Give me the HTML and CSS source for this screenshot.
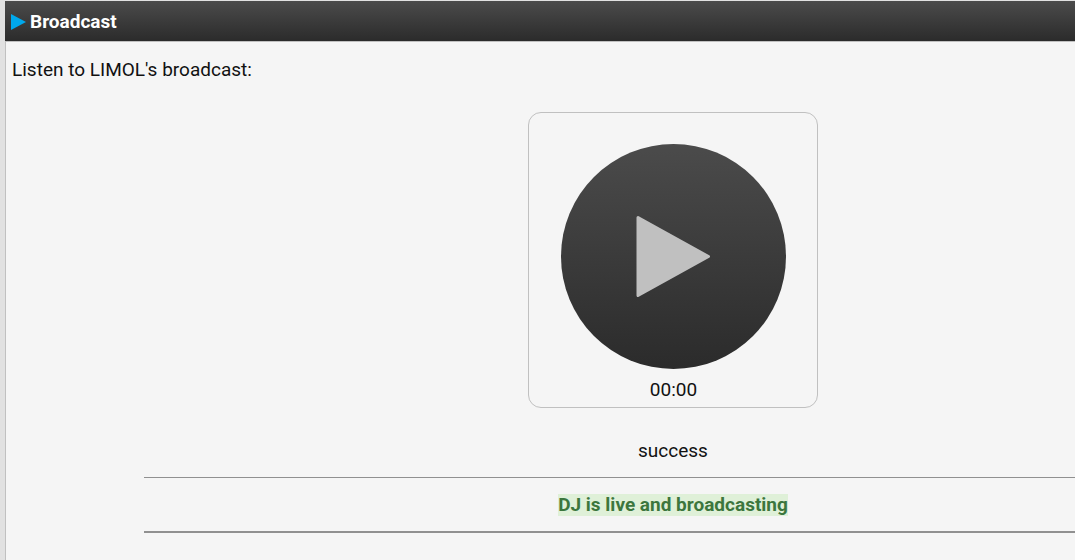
FILE: index.html
```html
<!DOCTYPE html>
<html lang="en">
<head>
<meta charset="utf-8">
<title>Broadcast</title>
<link rel="stylesheet" href="styles.css">
</head>
<body>
<main class="panel">
  <h1 class="panel-title">
    <svg class="title-icon" viewBox="0 0 15 18" aria-hidden="true"><path d="M0 1L15 9L0 17Z" fill="#00a8ec"/></svg>
    Broadcast
  </h1>
  <div class="panel-body">
    <p class="intro">Listen to LIMOL's broadcast:</p>
    <div class="broadcast">
      <div class="listen">
        <div class="player">
          <button class="play" type="button" aria-label="Play">
            <svg class="play-icon" viewBox="0 0 75 82" aria-hidden="true"><path d="M2 1.5L72.5 40.5L2 79.5Z" fill="#c0c0c0" stroke="#c0c0c0" stroke-width="3" stroke-linejoin="round"/></svg>
          </button>
          <time class="elapsed">00:00</time>
        </div>
        <p class="result">success</p>
      </div>
      <div class="status"><strong class="live">DJ is live and broadcasting</strong></div>
    </div>
  </div>
</main>
</body>
</html>
```
FILE: styles.css
```css
* {
  box-sizing: border-box;
}

body {
  margin: 0;
  padding: 1px 0 0 5px;
  background: #e1e1e1;
  color: #111;
  font-family: Roboto, "Liberation Sans", sans-serif;
  font-size: 19px;
  line-height: 22px;
}

p {
  margin: 0;
}

.panel-title {
  display: flex;
  align-items: center;
  gap: 4px;
  height: 40px;
  margin: 0;
  padding: 1px 0 0 6px;
  background: linear-gradient(#4b4b4b, #2b2b2b);
  color: #fff;
  font-size: 19px;
  font-weight: 700;
}

.title-icon {
  width: 15px;
  height: 18px;
}

.panel-body {
  min-height: calc(100vh - 41px);
  padding: 17px 0 0 6px;
  border: solid #c0c0c0;
  border-width: 1px 0 0 1px;
  background: #f5f5f5;
}

.broadcast {
  margin: 31px 0 0 132px;
}

.listen {
  display: flex;
  flex-direction: column;
  align-items: center;
  padding-left: 127px;
}

.player {
  display: flex;
  flex-direction: column;
  align-items: center;
  gap: 10px;
  padding: 31px 31px 6px 32px;
  border: 1px solid #c0c0c0;
  border-radius: 13px;
}

.play {
  display: grid;
  place-items: center;
  width: 225px;
  height: 225px;
  padding: 0;
  border: 0;
  border-radius: 50%;
  background: linear-gradient(#4b4b4b, #2b2b2b);
}

.play-icon {
  width: 75px;
  height: 82px;
}

.result {
  margin-top: 32px;
}

.status {
  display: flex;
  justify-content: center;
  margin-top: 15px;
  padding: 16px 0 15px 127px;
  border-top: 1px solid #909090;
  border-bottom: 2px solid #909090;
}

.live {
  background: #dff0d8;
  color: #3c763d;
}
```
